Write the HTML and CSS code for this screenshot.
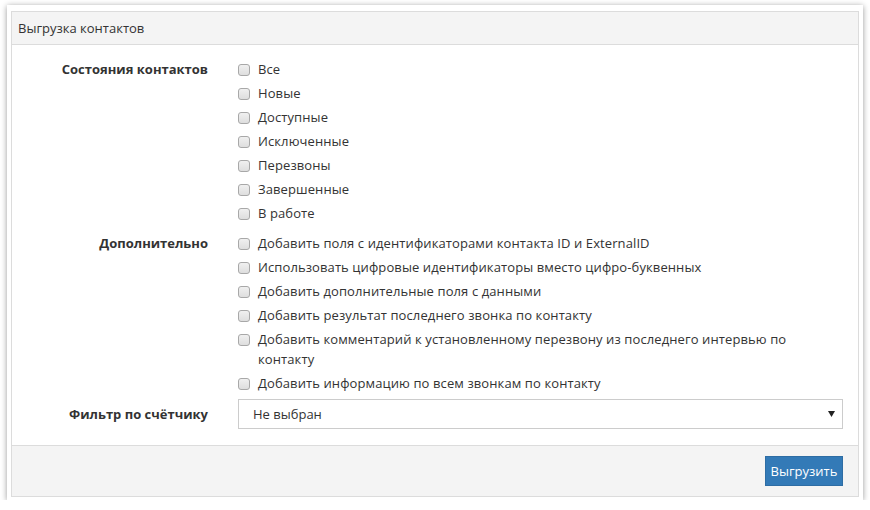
FILE: index.html
```html
<!DOCTYPE html>
<html lang="ru">
<head>
<meta charset="utf-8">
<link rel="stylesheet" href="styles.css">
</head>
<body>
<div class="card">
  <div class="panel">
    <div class="panel-heading">Выгрузка контактов</div>
    <div class="panel-body">
      <div class="group">
        <div class="label">Состояния контактов</div>
        <div class="controls">
          <label class="check"><span class="box"></span><span class="text">Все</span></label>
          <label class="check"><span class="box"></span><span class="text">Новые</span></label>
          <label class="check"><span class="box"></span><span class="text">Доступные</span></label>
          <label class="check"><span class="box"></span><span class="text">Исключенные</span></label>
          <label class="check"><span class="box"></span><span class="text">Перезвоны</span></label>
          <label class="check"><span class="box"></span><span class="text">Завершенные</span></label>
          <label class="check"><span class="box"></span><span class="text">В работе</span></label>
        </div>
      </div>
      <div class="group group-extra">
        <div class="label">Дополнительно</div>
        <div class="controls">
          <label class="check"><span class="box"></span><span class="text">Добавить поля с идентификаторами контакта ID и ExternalID</span></label>
          <label class="check"><span class="box"></span><span class="text">Использовать цифровые идентификаторы вместо цифро-буквенных</span></label>
          <label class="check"><span class="box"></span><span class="text">Добавить дополнительные поля с данными</span></label>
          <label class="check"><span class="box"></span><span class="text">Добавить результат последнего звонка по контакту</span></label>
          <label class="check"><span class="box"></span><span class="text">Добавить комментарий к установленному перезвону из последнего интервью по контакту</span></label>
          <label class="check"><span class="box"></span><span class="text">Добавить информацию по всем звонкам по контакту</span></label>
        </div>
      </div>
      <div class="group group-select">
        <div class="label label-select">Фильтр по счётчику</div>
        <div class="controls">
          <div class="select">
            <span>Не выбран</span>
            <svg class="caret" width="7" height="6" viewBox="0 0 7 6"><polygon points="0,0 7,0 3.5,6" fill="#222"/></svg>
          </div>
        </div>
      </div>
    </div>
    <div class="panel-footer">
      <button class="btn">Выгрузить</button>
    </div>
  </div>
</div>
</body>
</html>
```
FILE: styles.css
```css
* { box-sizing: border-box; }
html, body { margin: 0; padding: 0; background: #fff; }
body {
  font-family: "Open Sans", "Segoe UI", sans-serif;
  font-size: 13px;
  color: #333;
}
.card {
  margin: 5px 0 0 7px;
  width: 856px;
  padding: 6px 4px 3px 4px;
  background: #fff;
  box-shadow: 0 1px 6px rgba(0,0,0,0.4);
}
.panel {
  border: 1px solid #dcdcdc;
}
.panel-heading {
  height: 33px;
  background: #f4f4f4;
  border-bottom: 1px solid #dcdcdc;
  padding: 0 6px;
  line-height: 32px;
}
.panel-body {
  padding: 12px 15px 16px 15px;
}
.group {
  display: flex;
}
.group-extra { margin-top: 6px; }
.group-select { margin-top: 4px; }
.label {
  width: 196px;
  flex: none;
  padding-right: 15px;
  text-align: right;
  font-weight: bold;
  line-height: 24px;
}
.label-select { line-height: 30px; }
.controls {
  flex: 1;
  padding-left: 15px;
  display: flex;
  flex-direction: column;
}
.check {
  display: flex;
  align-items: flex-start;
  padding: 2px 0;
  line-height: 20px;
}
.box {
  flex: none;
  width: 12px;
  height: 12px;
  margin-top: 5px;
  margin-right: 8px;
  border: 1px solid #a8a8a8;
  border-radius: 3px;
  background: linear-gradient(#f0f0f0, #dedede);
}
.text { flex: 1; letter-spacing: 0.1px; }
.select {
  height: 30px;
  border: 1px solid #ccc;
  background: #fff;
  display: flex;
  align-items: center;
  justify-content: space-between;
  padding: 0 7px 0 14px;
}
.caret { display: block; }
.panel-footer {
  background: #f4f4f4;
  border-top: 1px solid #dcdcdc;
  padding: 10px 15px;
  display: flex;
  justify-content: flex-end;
}
.btn {
  height: 30px;
  width: 78px;
  background: #337ab7;
  border: 1px solid #2e6da4;
  color: #fff;
  font-family: "Open Sans", "Segoe UI", sans-serif;
  font-size: 13px;
  padding: 0;
  border-radius: 0;
}
```
